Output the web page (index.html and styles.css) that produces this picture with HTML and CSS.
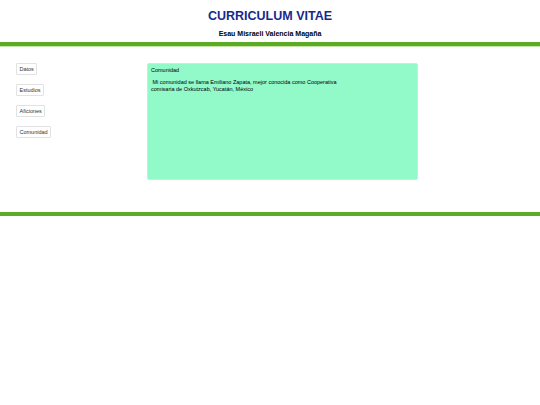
FILE: index.html
```html
<!DOCTYPE html>
<html lang="es">
<head>
<meta charset="utf-8">
<title>Curriculum Vitae</title>
<link rel="stylesheet" href="styles.css">
</head>
<body>
<header class="header">
  <h1 class="title">CURRICULUM VITAE</h1>
  <p class="name">Esau Misraeli Valencia Magaña</p>
</header>
<div class="bar"></div>
<main class="content">
  <nav class="sidebar">
    <button class="tab">Datos</button>
    <button class="tab">Estudios</button>
    <button class="tab">Aficiones</button>
    <button class="tab">Comunidad</button>
  </nav>
  <section class="panel">
    <div class="panel-title">Comunidad</div>
    <p class="panel-text">&nbsp;Mi comunidad se llama Emiliano Zapata, mejor conocida como Cooperativa<br>comisaria de Oxkutzcab, Yucatán, México</p>
  </section>
</main>
<div class="bar"></div>
</body>
</html>
```
FILE: styles.css
```css
html, body {
  margin: 0;
  padding: 0;
  background: #ffffff;
  font-family: "Liberation Sans", Arial, sans-serif;
}

.header {
  text-align: center;
  padding-top: 9px;
  padding-bottom: 4px;
}

.title {
  margin: 0;
  font-size: 12.5px;
  line-height: 14px;
  font-weight: bold;
  color: #162a8c;
}

.name {
  margin: 7px 0 0 0;
  font-size: 7px;
  line-height: 8px;
  font-weight: bold;
  color: #000;
}

.bar {
  height: 4px;
  background: #5cab27;
  box-shadow: 0 0 0.5px 0.5px #c6e6a8;
}

.content {
  display: flex;
  align-items: flex-start;
  padding: 17px 0 32px 16px;
}

.sidebar {
  width: 131px;
  display: flex;
  flex-direction: column;
  align-items: flex-start;
  gap: 9px;
}

.tab {
  font-family: "Liberation Sans", Arial, sans-serif;
  font-size: 5.5px;
  line-height: 6px;
  padding: 2px 2.5px;
  margin: 0;
  border: 1px solid #e2e2e2;
  border-radius: 1px;
  background: #ffffff;
  color: #333;
}

.panel {
  width: 271px;
  height: 117px;
  box-sizing: border-box;
  background: #92f9c8;
  border: 0.5px solid #b5f5df;
  border-radius: 2px;
  padding: 2.5px 3px;
  font-size: 5.5px;
  line-height: 7px;
  color: #000;
}

.panel-title {
  margin: 0;
}

.panel-text {
  margin: 5px 0 0 0;
}
```
